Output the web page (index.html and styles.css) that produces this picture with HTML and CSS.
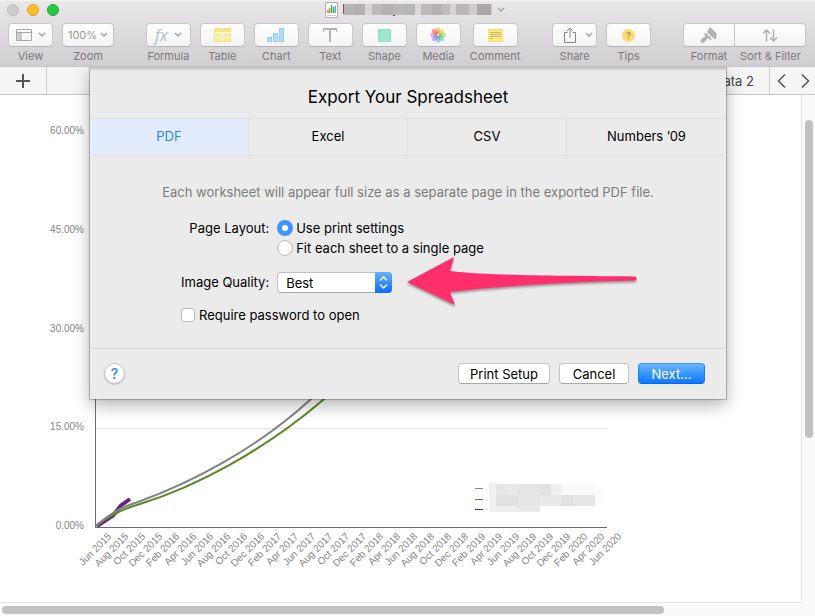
FILE: index.html
```html
<!DOCTYPE html>
<html lang="en">
<head>
<meta charset="utf-8">
<title>Export Your Spreadsheet</title>
<link rel="stylesheet" href="styles.css">
</head>
<body>
<div class="window">
  <header class="chrome">
    <div class="titlebar">
      <div class="lights">
        <button class="light light-close" type="button" aria-label="Close"></button>
        <button class="light light-min" type="button" aria-label="Minimize"></button>
        <button class="light light-zoom" type="button" aria-label="Full screen"></button>
      </div>
      <div class="doc">
        <svg width="13" height="16" viewBox="0 0 13 16"><path d="M.5.5h12v15H.5z" fill="#fff" stroke="#b5b2b5"/><path d="M3 11V8" stroke="#e03a30" stroke-width="1.2"/><path d="M4.800 11V6" stroke="#e8542f" stroke-width="1.2"/><path d="M6.600 11V3" stroke="#2db34a" stroke-width="1.2"/><path d="M8.400 11V5" stroke="#2db34a" stroke-width="1.2"/><path d="M10.200 11V4" stroke="#2c8fe0" stroke-width="1.2"/><path d="M2 13.500h9" stroke="#ccc"/></svg>
        <svg width="149" height="12" viewBox="0 0 149 12">
          <path d="M1 0h148v11H1z" fill="#cecacd"/>
          <path d="M1 0h10v11H1z" fill="#b9b3b6"/><path d="M11 0h11v11H11z" fill="#b3afb3"/><path d="M22 0h7v11h-7z" fill="#d8d5d8"/><path d="M29 0h10v11H29z" fill="#bcb8bc"/><path d="M39 0h11v11H39z" fill="#b4b0b4"/><path d="M50 0h11v11H50z" fill="#bab7ba"/><path d="M61 0h11v11H61z" fill="#b8b5b8"/><path d="M72 0h6v11h-6z" fill="#dad7da"/><path d="M78 0h11v11H78z" fill="#bcb8bc"/><path d="M89 0h10v11H89z" fill="#b4b1b4"/><path d="M99 0h8v11h-8z" fill="#bebabe"/><path d="M107 0h6v11h-6z" fill="#d6d3d6"/><path d="M113 0h13v11h-13z" fill="#b9b5b9"/><path d="M134 0h14v11h-14z" fill="#aaa6aa"/>
          <path d="M.5 0v10" stroke="#a0453a"/><path d="M50 11.500h2" stroke="#555"/>
        </svg>
        <svg width="8" height="6" viewBox="0 0 8 6"><path d="M1 1l3 3 3-3" fill="none" stroke="#aaa7aa" stroke-width="1.5"/></svg>
      </div>
    </div>
    <nav class="toolbar">
      <div class="group">
        <div class="tool"><button class="tb" type="button" aria-labelledby="t-view"><svg width="16" height="12" viewBox="0 0 16 12"><path d="M1 4h4v7H1z" fill="#ccc"/><path d="M.5.5h15v11H.5zM.5 3.500h15M5 3.500v8" fill="none" stroke="#a8a8a8"/></svg><svg class="chev" width="8" height="6" viewBox="0 0 8 6"><path d="M1 1l3 3 3-3"/></svg></button><span id="t-view">View</span></div>
        <div class="tool"><button class="tb tb-zoom" type="button" aria-labelledby="t-zoom">100%<svg class="chev" width="8" height="6" viewBox="0 0 8 6"><path d="M1 1l3 3 3-3"/></svg></button><span id="t-zoom">Zoom</span></div>
      </div>
      <div class="group">
        <div class="tool"><button class="tb" type="button" aria-labelledby="t-formula"><i class="fx">fx</i><svg class="chev" width="8" height="6" viewBox="0 0 8 6"><path d="M1 1l3 3 3-3"/></svg></button><span id="t-formula">Formula</span></div>
        <div class="tool"><button class="tb" type="button" aria-labelledby="t-table"><svg width="17" height="14" viewBox="0 0 17 14"><path d="M0 0h17v14H0z" fill="#fdee9c"/><path d="M0 0h17v4H0z" fill="#fbe48a"/><path d="M.5.5h16v13H.5z" fill="none" stroke="#f9e183"/><path d="M0 4.500h17M0 9.500h17M8.500 0v14" stroke="#fffce8"/></svg></button><span id="t-table">Table</span></div>
        <div class="tool"><button class="tb" type="button" aria-labelledby="t-chart"><svg width="18" height="14" viewBox="0 0 18 14"><path d="M0 9h5v5H0zM6 5h5v9H6zM12 0h5v14h-5z" fill="#b0dcf8"/><path d="M.5 9.500h4v4h-4zM6.500 5.500h4v8h-4zM12.500.5h4v13h-4z" fill="none" stroke="#97cdf0"/></svg></button><span id="t-chart">Chart</span></div>
        <div class="tool"><button class="tb" type="button" aria-labelledby="t-text"><svg width="14" height="14" viewBox="0 0 14 14"><path d="M0 1h14M7 1v13" stroke="#b4b4b4" stroke-width="2"/><path d="M.5 0v4M13.500 0v4" stroke="#b4b4b4"/></svg></button><span id="t-text">Text</span></div>
        <div class="tool"><button class="tb" type="button" aria-labelledby="t-shape"><svg width="13" height="13" viewBox="0 0 13 13"><path d="M.5.5h12v12H.5z" fill="#9ce8cc" stroke="#90e0c2"/></svg></button><span id="t-shape">Shape</span></div>
        <div class="tool"><button class="tb" type="button" aria-labelledby="t-media"><svg class="petals" width="16" height="16" viewBox="-8 -8 16 16"><rect x="-2.300" y="-7.800" width="4.600" height="7" rx="2.300" fill="#fbc16b"/><rect x="-2.300" y="-7.800" width="4.600" height="7" rx="2.300" fill="#e9e469" transform="rotate(45)"/><rect x="-2.300" y="-7.800" width="4.600" height="7" rx="2.300" fill="#a9dc84" transform="rotate(90)"/><rect x="-2.300" y="-7.800" width="4.600" height="7" rx="2.300" fill="#83d6bd" transform="rotate(135)"/><rect x="-2.300" y="-7.800" width="4.600" height="7" rx="2.300" fill="#91c4f5" transform="rotate(180)"/><rect x="-2.300" y="-7.800" width="4.600" height="7" rx="2.300" fill="#b3a4ec" transform="rotate(225)"/><rect x="-2.300" y="-7.800" width="4.600" height="7" rx="2.300" fill="#e4a0e2" transform="rotate(270)"/><rect x="-2.300" y="-7.800" width="4.600" height="7" rx="2.300" fill="#fb8177" transform="rotate(315)"/></svg></button><span id="t-media">Media</span></div>
        <div class="tool"><button class="tb" type="button" aria-labelledby="t-comment"><svg width="15" height="13" viewBox="0 0 15 13"><path d="M.5.5h14v12H.5z" fill="#fce887" stroke="#f6dc78"/><path d="M2 3.500h11M2 5.500h11M2 7.500h11M2 9.500h3" stroke="#c6b768"/></svg></button><span id="t-comment">Comment</span></div>
      </div>
      <div class="group">
        <div class="tool"><button class="tb tb-share" type="button" aria-labelledby="t-share"><svg width="12" height="16" viewBox="0 0 12 16"><path d="M3.500 5.500h-3v10h11v-10h-3M6 11V1M3 4l3-3 3 3" fill="none" stroke="#858585"/></svg><svg class="chev" width="8" height="6" viewBox="0 0 8 6"><path d="M1 1l3 3 3-3"/></svg></button><span id="t-share">Share</span></div>
        <div class="tool"><button class="tb" type="button" aria-labelledby="t-tips"><i class="tip">?</i></button><span id="t-tips">Tips</span></div>
      </div>
      <div class="group joined">
        <div class="tool"><button class="tb tb-format" type="button" aria-labelledby="t-format"><svg width="18" height="16" viewBox="0 0 18 16"><path d="M10 0l7 7-1 2v3h-2v-2l-1 1-6-6 1-2zM5.500 5.500L12 12l-2 1-2-2-4 4.500C2 17-.5 14.500 1 12.500l4.500-3.500L4 7.500z" fill="#b0b0b0"/></svg></button><span id="t-format">Format</span></div>
        <div class="tool"><button class="tb tb-sort" type="button" aria-labelledby="t-sort"><svg width="16" height="13" viewBox="0 0 16 13"><path d="M4.500 12.500V1M1 4.500L4.500 1 8 4.500M11.500 .5V12M8 8.500l3.500 3.500L15 8.500" fill="none" stroke="#b0b0b0" stroke-width="1.500"/></svg></button><span id="t-sort">Sort &amp; Filter</span></div>
      </div>
    </nav>
  </header>

  <div class="sheets">
    <button class="add" type="button" aria-label="Add sheet"><svg width="14" height="14" viewBox="0 0 14 14"><path d="M0 7h14M7 0v14" stroke="#555" stroke-width="2"/></svg></button>
    <button class="sheet-tab" type="button">Data 2</button>
    <div class="pager">
      <button type="button" aria-label="Previous sheet"><svg width="9" height="14" viewBox="0 0 9 14"><path d="M8 .5L1.500 7 8 13.500"/></svg></button>
      <button type="button" aria-label="Next sheet"><svg width="9" height="14" viewBox="0 0 9 14"><path d="M1 .5L7.500 7 1 13.500"/></svg></button>
    </div>
  </div>

  <main class="work">
    <div class="canvas">
      <svg class="chart" width="640" height="490" viewBox="0 95 640 490">
        <path d="M96 131.500h511M96 230.500h511M96 329.500h511M96 428.500h511" stroke="#e6e6e6"/>
        <g text-anchor="end"><text x="84" y="134">60.00%</text><text x="84" y="233">45.00%</text><text x="84" y="332">30.00%</text><text x="84" y="430">15.00%</text><text x="84" y="529">0.00%</text></g>
        <path d="M95.500 120v407.500H607" fill="none" stroke="#6e6e6e"/>
        <g fill="none">
          <path d="M97 526L113 515.500 121 505.500 130 499" stroke="#6b2382" stroke-width="4"/>
          <path d="M96 526C110 515 122 509 140 504 195 487 262 452 323 400l5-5" stroke="#578a26" stroke-width="2"/>
          <path d="M96 526C110 513 122 507 138 502 190 483 255 450 310 400l5-5" stroke="#828282" stroke-width="2"/>
        </g>
        <g text-anchor="end">
          <text transform="translate(112 537) rotate(-45)">Jun 2015</text>
          <text transform="translate(129 537) rotate(-45)">Aug 2015</text>
          <text transform="translate(146 537) rotate(-45)">Oct 2015</text>
          <text transform="translate(163 537) rotate(-45)">Dec 2015</text>
          <text transform="translate(180 537) rotate(-45)">Feb 2016</text>
          <text transform="translate(197 537) rotate(-45)">Apr 2016</text>
          <text transform="translate(214 537) rotate(-45)">Jun 2016</text>
          <text transform="translate(231 537) rotate(-45)">Aug 2016</text>
          <text transform="translate(248 537) rotate(-45)">Oct 2016</text>
          <text transform="translate(265 537) rotate(-45)">Dec 2016</text>
          <text transform="translate(282 537) rotate(-45)">Feb 2017</text>
          <text transform="translate(299 537) rotate(-45)">Apr 2017</text>
          <text transform="translate(316 537) rotate(-45)">Jun 2017</text>
          <text transform="translate(333 537) rotate(-45)">Aug 2017</text>
          <text transform="translate(350 537) rotate(-45)">Oct 2017</text>
          <text transform="translate(367 537) rotate(-45)">Dec 2017</text>
          <text transform="translate(384 537) rotate(-45)">Feb 2018</text>
          <text transform="translate(401 537) rotate(-45)">Apr 2018</text>
          <text transform="translate(418 537) rotate(-45)">Jun 2018</text>
          <text transform="translate(435 537) rotate(-45)">Aug 2018</text>
          <text transform="translate(452 537) rotate(-45)">Oct 2018</text>
          <text transform="translate(469 537) rotate(-45)">Dec 2018</text>
          <text transform="translate(486 537) rotate(-45)">Feb 2019</text>
          <text transform="translate(503 537) rotate(-45)">Apr 2019</text>
          <text transform="translate(520 537) rotate(-45)">Jun 2019</text>
          <text transform="translate(537 537) rotate(-45)">Aug 2019</text>
          <text transform="translate(554 537) rotate(-45)">Oct 2019</text>
          <text transform="translate(571 537) rotate(-45)">Dec 2019</text>
          <text transform="translate(588 537) rotate(-45)">Feb 2020</text>
          <text transform="translate(605 537) rotate(-45)">Apr 2020</text>
          <text transform="translate(622 537) rotate(-45)">Jun 2020</text>
        </g>
        <path d="M475 488.500h8" stroke="#828282"/><path d="M475 499.500h8" stroke="#578a26"/><path d="M475 509.500h8" stroke="#6b2382"/>
        <path d="M489 483h7v29h-7z" fill="#f0f0f0"/><path d="M496 484h11v11h-11z" fill="#e6e6e6"/><path d="M507 484h11v11h-11z" fill="#eaeaea"/><path d="M518 484h22v11h-22z" fill="#e4e4e4"/><path d="M540 484h11v11h-11z" fill="#e0e0e0"/><path d="M551 484h11v11h-11z" fill="#efefef"/><path d="M562 484h33v11h-33z" fill="#f9f9f9"/>
        <path d="M496 495h22v11h-22z" fill="#e1e1e1"/><path d="M518 495h22v11h-22z" fill="#e6e6e6"/><path d="M540 495h22v11h-22z" fill="#e9e9e9"/><path d="M562 495h11v11h-11z" fill="#e1e1e1"/><path d="M573 495h22v11h-22z" fill="#e6e6e6"/><path d="M595 484h8v22h-8z" fill="#fcfcfc"/>
        <path d="M496 506h22v6h-22z" fill="#efefef"/><path d="M518 506h22v6h-22z" fill="#e9e9e9"/>
      </svg>
    </div>
    <div class="track-y"><div class="thumb-y"></div></div>
    <div class="track-x"><div class="thumb-x"></div></div>
  </main>

  <section class="dialog" role="dialog" aria-labelledby="dialog-title">
    <h1 id="dialog-title">Export Your Spreadsheet</h1>
    <div class="formats" role="tablist">
      <button class="format active" type="button" role="tab" aria-selected="true">PDF</button>
      <button class="format" type="button" role="tab">Excel</button>
      <button class="format" type="button" role="tab">CSV</button>
      <button class="format" type="button" role="tab">Numbers ’09</button>
    </div>
    <form class="options">
      <p class="note">Each worksheet will appear full size as a separate page in the exported PDF file.</p>
      <div class="fields">
        <span class="field-name" id="layout-name">Page Layout:</span>
        <div class="radios" role="radiogroup" aria-labelledby="layout-name">
          <label><input type="radio" name="layout" checked>Use print settings</label>
          <label><input type="radio" name="layout">Fit each sheet to a single page</label>
        </div>
        <label class="field-name" for="quality">Image Quality:</label>
        <div class="popup">
          <select id="quality"><option>Best</option></select>
          <svg class="stepper" width="17" height="21" viewBox="0 0 17 21"><path d="M5 8.500L8.500 5 12 8.500M5 12.500L8.500 16 12 12.500" fill="none" stroke="#fff" stroke-width="1.500"/></svg>
        </div>
        <label class="password"><input type="checkbox">Require password to open</label>
      </div>
    </form>
    <footer class="actions">
      <button class="help" type="button" aria-label="Help">?</button>
      <button class="push push-setup" type="button">Print Setup</button>
      <button class="push" type="button">Cancel</button>
      <button class="push primary" type="button">Next…</button>
    </footer>
    <svg class="arrow" width="236" height="56" viewBox="0 0 236 56"><path d="M1 26L48 1 44 15C80 19 120 19.500 229 20.500C231 20.500 231 24.500 229 24.500C150 26 90 31 44 36L49 49z" fill="#ff2f6c"/></svg>
  </section>
</div>
</body>
</html>
```

FILE: styles.css
```css
* { box-sizing: border-box; }
body { margin: 0; font: 13px/16px Inter, "Liberation Sans", sans-serif; color: #000; background: #fff; }
button, select, input { font: inherit; color: inherit; margin: 0; padding: 0; border: 0; background: none; }
svg { display: block; flex: none; }

.window { position: relative; display: flex; flex-direction: column; height: 100vh; overflow: hidden; }

.chrome { height: 67px; flex: none; background: linear-gradient(#e9e7e9, #d0ced0); border-top: 1px solid #f4f3f4; border-bottom: 1px solid #c4c2c4; }
.titlebar { height: 22px; display: grid; grid-template-columns: 1fr auto 1fr; align-items: start; }
.lights { display: flex; gap: 8px; padding: 3px 7px; }
.light { width: 12px; height: 12px; border-radius: 50%; border: 1px solid #bdbbbd; background: #cfcdcf; }
.light-min { background: #ffbd2e; border-color: #e5a028; }
.light-zoom { background: #28c940; border-color: #1eac30; }
.doc { display: flex; align-items: center; gap: 5px; padding: 1px 0 0 14px; }

.toolbar { display: flex; justify-content: space-between; padding: 0 9px 0 8px; }
.group { display: flex; gap: 9px; }
.joined { gap: 0; }
.tool { display: flex; flex-direction: column; align-items: center; gap: 2px; font-size: 11px; line-height: 14px; color: #7b797b; }
.tb { width: 45px; height: 24px; display: flex; align-items: center; justify-content: center; gap: 6px; border: 1px solid #c9c7c9; border-bottom-color: #b5b3b5; border-radius: 4px; background: linear-gradient(#fff, #f3f3f3); color: #999; }
.tb-zoom { width: 52px; gap: 3px; }
.tb-share { gap: 9px; padding-left: 7px; }
.tb-format { width: 52px; border-radius: 4px 0 0 4px; }
.tb-sort { width: 71px; border-radius: 0 4px 4px 0; border-left: 0; }
.chev path { fill: none; stroke: #a3a3a3; stroke-width: 1.5; }
.fx { font: italic 16px/20px "Open Sans", sans-serif; color: #b3bcc6; }
.petals { opacity: .8; }
.petals rect { mix-blend-mode: multiply; }
.tip { width: 13px; height: 13px; border-radius: 50%; background: #fbd975; color: #b39a4f; font: bold 9px/13px Inter, sans-serif; text-align: center; }

.sheets { height: 28px; flex: none; display: flex; background: #f5f5f5; border-bottom: 1px solid #c6c6c6; }
.add { width: 47px; display: grid; place-items: center; border-right: 1px solid #cfcfcf; }
.sheet-tab { margin-left: auto; padding: 0 15px; border-right: 1px solid #cfcfcf; color: #444; }
.pager { width: 45px; display: flex; justify-content: space-between; padding: 0 5px 0 7px; }
.pager path { fill: none; stroke: #555; stroke-width: 1.5; }

.work { flex: 1; min-height: 0; display: grid; grid-template-columns: 1fr 14px; grid-template-rows: 1fr 14px; background: #fafafa; }
.canvas { background: #fff; overflow: hidden; }
.chart text { font: 10px "Liberation Sans", sans-serif; fill: #858585; }
.track-y { border-left: 1px solid #e3e3e3; padding: 25px 2px 0 3px; }
.thumb-y { height: 66%; border-radius: 4px; background: #c1c1c1; }
.track-x { border-top: 1px solid #e3e3e3; padding: 3px 2px 0; }
.thumb-x { width: 83%; height: 8px; border-radius: 4px; background: #c1c1c1; }

.dialog { position: absolute; top: 67px; left: 90px; right: 89px; background: #ebebeb; box-shadow: 0 0 1px 1px rgba(0,0,0,.22), 0 6px 16px rgba(0,0,0,.3); clip-path: inset(0 -40px -40px); }
.dialog::before { content: ""; display: block; height: 4px; background: linear-gradient(#bcbcbc, #ebebeb); }
.dialog h1 { margin: 0; padding: 16px 0 11px; font-size: 17px; line-height: 20px; font-weight: 400; text-align: center; }
.formats { display: grid; grid-template-columns: repeat(4, 1fr); border-top: 1px solid #dfdfdf; border-bottom: 1px solid #dfdfdf; }
.format { height: 36px; padding-bottom: 2px; border-right: 1px solid #dfdfdf; }
.format:last-child { border-right: 0; }
.format.active { background: #e3ecff; color: #2b83f6; }

.options { padding: 28px 0 25px; }
.note { margin: 0 0 18px; text-align: center; color: #7b7b7b; }
.fields { display: grid; grid-template-columns: max-content 1fr; column-gap: 8px; row-gap: 14px; padding-left: 91px; }
.field-name { line-height: 20px; text-align: right; }
.radios label { display: flex; align-items: center; gap: 3px; height: 20px; }
input[type="radio"] { appearance: none; width: 16px; height: 16px; border-radius: 50%; border: 1px solid #b9b9b9; background: #fff; }
input[type="radio"]:checked { border: 5px solid #3b97fc; }
.popup { position: relative; width: 115px; height: 21px; }
.popup select { appearance: none; width: 100%; height: 21px; padding: 0 8px; border: 1px solid #c2c2c2; border-bottom-color: #a9a9a9; border-radius: 4px; background: #fff; }
.stepper { position: absolute; top: 0; right: 0; border-radius: 0 4px 4px 0; background: linear-gradient(#67b2fb, #0a6cff); pointer-events: none; }
.password { grid-column: 1 / -1; display: flex; align-items: center; gap: 4px; }
input[type="checkbox"] { appearance: none; width: 14px; height: 14px; border: 1px solid #b9b9b9; border-radius: 3px; background: #fff; }

.actions { display: flex; align-items: center; gap: 9px; padding: 14px 21px 15px 14px; border-top: 1px solid #d6d6d6; }
.help { width: 21px; height: 21px; margin-right: auto; border: 1px solid #c2c2c2; border-radius: 50%; background: #fff; color: #1a86ff; font-size: 14px; font-weight: 500; box-shadow: 0 1px 1px rgba(0,0,0,.15); }
.push { min-width: 70px; height: 21px; border: 1px solid #c4c4c4; border-bottom-color: #a9a9a9; border-radius: 4px; background: #fff; }
.push-setup { min-width: 92px; }
.primary { min-width: 67px; color: #fff; border-color: #3d97f8 #1a7dfb #0a62f0; background: linear-gradient(#6bb4fc, #0a78ff); }
.arrow { position: absolute; left: 316px; top: 189px; filter: drop-shadow(0 2px 1px rgba(0,0,0,.35)); }
```
